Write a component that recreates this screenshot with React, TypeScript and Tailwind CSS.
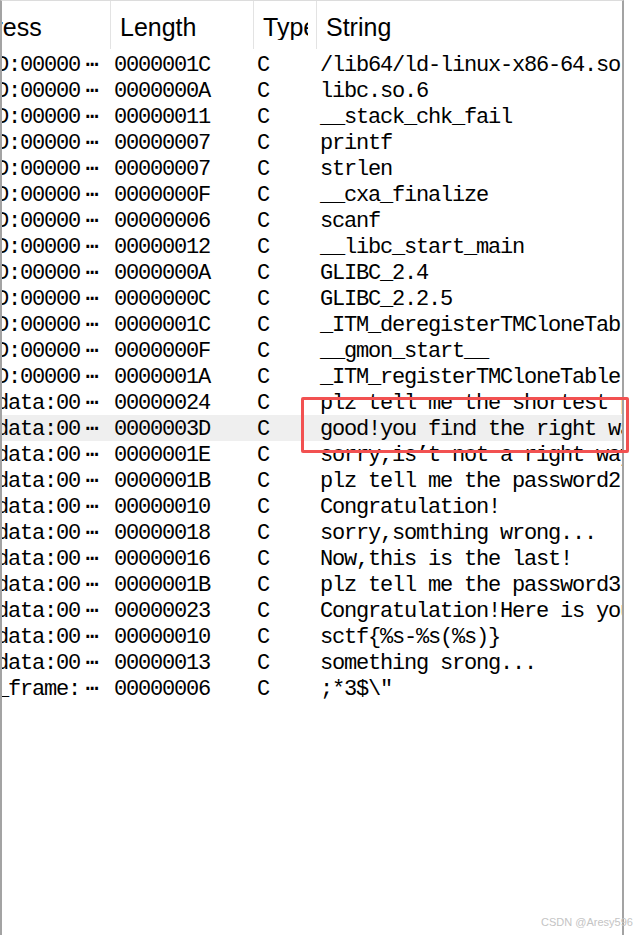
const rows: [string, string, string][] = [
  ["LOAD:00000", "0000001C", "/lib64/ld-linux-x86-64.so.2"],
  ["LOAD:00000", "0000000A", "libc.so.6"],
  ["LOAD:00000", "00000011", "__stack_chk_fail"],
  ["LOAD:00000", "00000007", "printf"],
  ["LOAD:00000", "00000007", "strlen"],
  ["LOAD:00000", "0000000F", "__cxa_finalize"],
  ["LOAD:00000", "00000006", "scanf"],
  ["LOAD:00000", "00000012", "__libc_start_main"],
  ["LOAD:00000", "0000000A", "GLIBC_2.4"],
  ["LOAD:00000", "0000000C", "GLIBC_2.2.5"],
  ["LOAD:00000", "0000001C", "_ITM_deregisterTMCloneTable"],
  ["LOAD:00000", "0000000F", "__gmon_start__"],
  ["LOAD:00000", "0000001A", "_ITM_registerTMCloneTable"],
  [".rodata:00", "00000024", "plz tell me the shortest password1:"],
  [".rodata:00", "0000003D", "good!you find the right way!"],
  [".rodata:00", "0000001E", "sorry,is\u2019t not a right way..."],
  [".rodata:00", "0000001B", "plz tell me the password2:"],
  [".rodata:00", "00000010", "Congratulation!"],
  [".rodata:00", "00000018", "sorry,somthing wrong..."],
  [".rodata:00", "00000016", "Now,this is the last!"],
  [".rodata:00", "0000001B", "plz tell me the password3:"],
  [".rodata:00", "00000023", "Congratulation!Here is your flag:"],
  [".rodata:00", "00000010", "sctf{%s-%s(%s)}"],
  [".rodata:00", "00000013", "something srong..."],
  [".eh_frame:", "00000006", ";*3$\\\u2033"],
];

const mono = "font-['Liberation_Mono',monospace] text-[22px] tracking-[-1.2px]";

function App() {
  return (
    <div className="relative w-[638px] h-[935px] bg-white overflow-hidden">
      <div className="w-[624px] h-full border-l-2 border-r-2 border-t border-l-[#a3a3a3] border-r-[#a3a3a3] border-t-[#dcdcdc]">
        {/* header */}
        <div className="flex h-[48px] mb-[2px] font-['Liberation_Sans',Arial,sans-serif] text-[25px] leading-[25px] text-black">
          <div className="w-[109px] shrink-0 border-r border-[#e3e3e3] overflow-hidden whitespace-nowrap pt-[14px]">
            <span className="ml-[-52px]">Address</span>
          </div>
          <div className="w-[143px] shrink-0 border-r border-[#e3e3e3] pl-[9px] pt-[14px]">Length</div>
          <div className="w-[63px] shrink-0 border-r border-[#e3e3e3] pl-[9px] pr-[8px] pt-[14px]">
            <div className="overflow-hidden whitespace-nowrap">Type</div>
          </div>
          <div className="flex-1 pl-[9px] pt-[14px]">String</div>
        </div>

        {/* rows */}
        {rows.map(([addr, len, str], i) => (
          <div
            key={i}
            className={`flex h-[26px] pt-[3px] leading-[24px] text-black whitespace-nowrap ${mono} ${
              i === 14 ? "bg-[#efefef]" : ""
            }`}
          >
            <div className="w-[109px] shrink-0 overflow-hidden">
              <span className="inline-block ml-[-42px]">
                {addr}
                <span className="inline-block w-[24px] text-center tracking-normal">⋯</span>
              </span>
            </div>
            <div className="w-[143px] shrink-0 pl-[3px]">{len}</div>
            <div className="w-[63px] shrink-0 pl-[3px]">C</div>
            <div className="flex-1 overflow-hidden pl-[3px]">{str}</div>
          </div>
        ))}
      </div>

      {/* highlight box */}
      <div className="absolute left-[301px] top-[397px] w-[328px] h-[56px] border-[3px] border-[#f25151] rounded-[2px]" />

      <div className="absolute left-[541px] top-[916px] text-[11px] leading-[13px] text-[#c4c4c4] font-['Liberation_Sans',Arial,sans-serif] whitespace-nowrap">
        CSDN @Aresy596
      </div>
    </div>
  );
}

export default App;
